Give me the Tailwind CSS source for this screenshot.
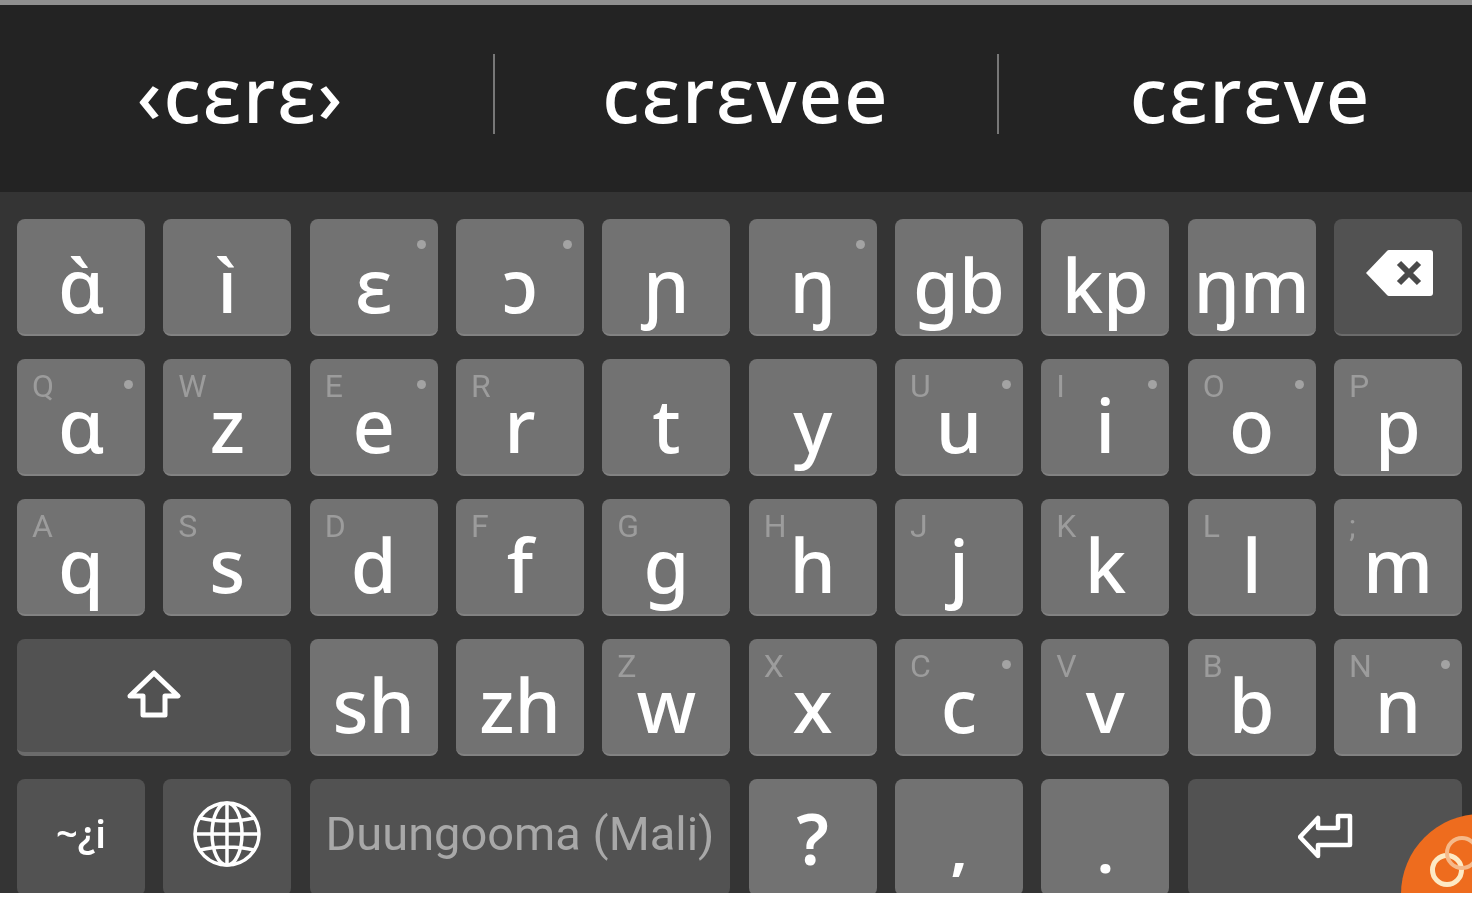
<!DOCTYPE html>
<html lang="en">
<head>
  <meta charset="UTF-8" />
  <title>Keyboard</title>
  <script src="https://cdn.jsdelivr.net/npm/@tailwindcss/browser@4"></script>
</head>
<body class="bg-white">
<div class="relative h-[893px] overflow-hidden bg-[#343434] font-['Noto_Sans',sans-serif] font-medium text-white blur-[0.5px]">
  <div class="h-[5px] bg-[#8f8f8f]"></div>

  <!-- suggestions -->
  <div class="flex h-[187px] items-center bg-[#232323] pb-[10px] text-[76px] leading-none tracking-[2px]">
    <div class="w-[493px] pr-[12px] text-center">‹cɛrɛ›</div>
    <div class="h-[80px] w-[2px] bg-[#777777]"></div>
    <div class="w-[502px] text-center">cɛrɛvee</div>
    <div class="h-[80px] w-[2px] bg-[#777777]"></div>
    <div class="flex-1 pl-[30px] text-center">cɛrɛve</div>
  </div>

  <!-- keys -->
  <div class="grid grid-cols-10 grid-rows-[117px_117px_117px_117px_117px] gap-x-[18.4px] gap-y-[23px] pt-[27px] pr-[10px] pl-[17px] text-[74px] leading-none">
    <div class="flex justify-center rounded-[8px] border-b-2 border-[#828282] bg-[#727272] pt-[29px]">ɑ̀</div>
    <div class="flex justify-center rounded-[8px] border-b-2 border-[#828282] bg-[#727272] pt-[29px]">ì</div>
    <div class="relative flex justify-center rounded-[8px] border-b-2 border-[#828282] bg-[#727272] pt-[29px]">ɛ<span class="absolute top-[21px] right-[12px] size-[9px] rounded-full bg-[#a3a3a3]"></span></div>
    <div class="relative flex justify-center rounded-[8px] border-b-2 border-[#828282] bg-[#727272] pt-[29px]">ɔ<span class="absolute top-[21px] right-[12px] size-[9px] rounded-full bg-[#a3a3a3]"></span></div>
    <div class="flex justify-center rounded-[8px] border-b-2 border-[#828282] bg-[#727272] pt-[29px]">ɲ</div>
    <div class="relative flex justify-center rounded-[8px] border-b-2 border-[#828282] bg-[#727272] pt-[29px]">ŋ<span class="absolute top-[21px] right-[12px] size-[9px] rounded-full bg-[#a3a3a3]"></span></div>
    <div class="flex justify-center rounded-[8px] border-b-2 border-[#828282] bg-[#727272] pt-[29px]">gb</div>
    <div class="flex justify-center rounded-[8px] border-b-2 border-[#828282] bg-[#727272] pt-[29px]">kp</div>
    <div class="flex justify-center rounded-[8px] border-b-2 border-[#828282] bg-[#727272] pt-[29px]">ŋm</div>
    <div class="flex items-start justify-center rounded-[8px] border-b-2 border-[#6b6b6b] bg-[#525252] pt-[30px] pl-[4px]">
      <svg width="70" height="48" viewBox="0 0 70 48"><path fill="#fff" d="M1 24 22 2a3 3 0 0 1 2-1h41a3 3 0 0 1 3 3v40a3 3 0 0 1-3 3H24a3 3 0 0 1-2-1z"/><path stroke="#4a4a4a" stroke-width="6" d="m34 14 20 20M54 14 34 34"/></svg>
    </div>

    <div class="relative flex justify-center rounded-[8px] border-b-2 border-[#828282] bg-[#727272] pt-[29px]"><span class="absolute top-[11px] left-[15px] font-['Roboto',sans-serif] text-[32px] font-normal text-[#9c9c9c]">Q</span><span class="absolute top-[21px] right-[12px] size-[9px] rounded-full bg-[#a3a3a3]"></span>ɑ</div>
    <div class="relative flex justify-center rounded-[8px] border-b-2 border-[#828282] bg-[#727272] pt-[29px]"><span class="absolute top-[11px] left-[15px] font-['Roboto',sans-serif] text-[32px] font-normal text-[#9c9c9c]">W</span>z</div>
    <div class="relative flex justify-center rounded-[8px] border-b-2 border-[#828282] bg-[#727272] pt-[29px]"><span class="absolute top-[11px] left-[15px] font-['Roboto',sans-serif] text-[32px] font-normal text-[#9c9c9c]">E</span><span class="absolute top-[21px] right-[12px] size-[9px] rounded-full bg-[#a3a3a3]"></span>e</div>
    <div class="relative flex justify-center rounded-[8px] border-b-2 border-[#828282] bg-[#727272] pt-[29px]"><span class="absolute top-[11px] left-[15px] font-['Roboto',sans-serif] text-[32px] font-normal text-[#9c9c9c]">R</span>r</div>
    <div class="flex justify-center rounded-[8px] border-b-2 border-[#828282] bg-[#727272] pt-[29px]">t</div>
    <div class="flex justify-center rounded-[8px] border-b-2 border-[#828282] bg-[#727272] pt-[29px]">y</div>
    <div class="relative flex justify-center rounded-[8px] border-b-2 border-[#828282] bg-[#727272] pt-[29px]"><span class="absolute top-[11px] left-[15px] font-['Roboto',sans-serif] text-[32px] font-normal text-[#9c9c9c]">U</span><span class="absolute top-[21px] right-[12px] size-[9px] rounded-full bg-[#a3a3a3]"></span>u</div>
    <div class="relative flex justify-center rounded-[8px] border-b-2 border-[#828282] bg-[#727272] pt-[29px]"><span class="absolute top-[11px] left-[15px] font-['Roboto',sans-serif] text-[32px] font-normal text-[#9c9c9c]">I</span><span class="absolute top-[21px] right-[12px] size-[9px] rounded-full bg-[#a3a3a3]"></span>i</div>
    <div class="relative flex justify-center rounded-[8px] border-b-2 border-[#828282] bg-[#727272] pt-[29px]"><span class="absolute top-[11px] left-[15px] font-['Roboto',sans-serif] text-[32px] font-normal text-[#9c9c9c]">O</span><span class="absolute top-[21px] right-[12px] size-[9px] rounded-full bg-[#a3a3a3]"></span>o</div>
    <div class="relative flex justify-center rounded-[8px] border-b-2 border-[#828282] bg-[#727272] pt-[29px]"><span class="absolute top-[11px] left-[15px] font-['Roboto',sans-serif] text-[32px] font-normal text-[#9c9c9c]">P</span>p</div>

    <div class="relative flex justify-center rounded-[8px] border-b-2 border-[#828282] bg-[#727272] pt-[29px]"><span class="absolute top-[11px] left-[15px] font-['Roboto',sans-serif] text-[32px] font-normal text-[#9c9c9c]">A</span>q</div>
    <div class="relative flex justify-center rounded-[8px] border-b-2 border-[#828282] bg-[#727272] pt-[29px]"><span class="absolute top-[11px] left-[15px] font-['Roboto',sans-serif] text-[32px] font-normal text-[#9c9c9c]">S</span>s</div>
    <div class="relative flex justify-center rounded-[8px] border-b-2 border-[#828282] bg-[#727272] pt-[29px]"><span class="absolute top-[11px] left-[15px] font-['Roboto',sans-serif] text-[32px] font-normal text-[#9c9c9c]">D</span>d</div>
    <div class="relative flex justify-center rounded-[8px] border-b-2 border-[#828282] bg-[#727272] pt-[29px]"><span class="absolute top-[11px] left-[15px] font-['Roboto',sans-serif] text-[32px] font-normal text-[#9c9c9c]">F</span>f</div>
    <div class="relative flex justify-center rounded-[8px] border-b-2 border-[#828282] bg-[#727272] pt-[29px]"><span class="absolute top-[11px] left-[15px] font-['Roboto',sans-serif] text-[32px] font-normal text-[#9c9c9c]">G</span>g</div>
    <div class="relative flex justify-center rounded-[8px] border-b-2 border-[#828282] bg-[#727272] pt-[29px]"><span class="absolute top-[11px] left-[15px] font-['Roboto',sans-serif] text-[32px] font-normal text-[#9c9c9c]">H</span>h</div>
    <div class="relative flex justify-center rounded-[8px] border-b-2 border-[#828282] bg-[#727272] pt-[29px]"><span class="absolute top-[11px] left-[15px] font-['Roboto',sans-serif] text-[32px] font-normal text-[#9c9c9c]">J</span>j</div>
    <div class="relative flex justify-center rounded-[8px] border-b-2 border-[#828282] bg-[#727272] pt-[29px]"><span class="absolute top-[11px] left-[15px] font-['Roboto',sans-serif] text-[32px] font-normal text-[#9c9c9c]">K</span>k</div>
    <div class="relative flex justify-center rounded-[8px] border-b-2 border-[#828282] bg-[#727272] pt-[29px]"><span class="absolute top-[11px] left-[15px] font-['Roboto',sans-serif] text-[32px] font-normal text-[#9c9c9c]">L</span>l</div>
    <div class="relative flex justify-center rounded-[8px] border-b-2 border-[#828282] bg-[#727272] pt-[29px]"><span class="absolute top-[11px] left-[15px] font-['Roboto',sans-serif] text-[32px] font-normal text-[#9c9c9c]">;</span>m</div>

    <div class="col-span-2 flex items-start justify-center rounded-[8px] border-b-4 border-[#6b6b6b] bg-[#525252] pt-[31px]">
      <svg width="54" height="48" viewBox="0 0 54 48" fill="none" stroke="#fff" stroke-width="5" stroke-linejoin="round"><path d="M27 3 51 26H38V45H16V26H3z"/></svg>
    </div>
    <div class="flex justify-center rounded-[8px] border-b-2 border-[#828282] bg-[#727272] pt-[29px]">sh</div>
    <div class="flex justify-center rounded-[8px] border-b-2 border-[#828282] bg-[#727272] pt-[29px]">zh</div>
    <div class="relative flex justify-center rounded-[8px] border-b-2 border-[#828282] bg-[#727272] pt-[29px]"><span class="absolute top-[11px] left-[15px] font-['Roboto',sans-serif] text-[32px] font-normal text-[#9c9c9c]">Z</span>w</div>
    <div class="relative flex justify-center rounded-[8px] border-b-2 border-[#828282] bg-[#727272] pt-[29px]"><span class="absolute top-[11px] left-[15px] font-['Roboto',sans-serif] text-[32px] font-normal text-[#9c9c9c]">X</span>x</div>
    <div class="relative flex justify-center rounded-[8px] border-b-2 border-[#828282] bg-[#727272] pt-[29px]"><span class="absolute top-[11px] left-[15px] font-['Roboto',sans-serif] text-[32px] font-normal text-[#9c9c9c]">C</span><span class="absolute top-[21px] right-[12px] size-[9px] rounded-full bg-[#a3a3a3]"></span>c</div>
    <div class="relative flex justify-center rounded-[8px] border-b-2 border-[#828282] bg-[#727272] pt-[29px]"><span class="absolute top-[11px] left-[15px] font-['Roboto',sans-serif] text-[32px] font-normal text-[#9c9c9c]">V</span>v</div>
    <div class="relative flex justify-center rounded-[8px] border-b-2 border-[#828282] bg-[#727272] pt-[29px]"><span class="absolute top-[11px] left-[15px] font-['Roboto',sans-serif] text-[32px] font-normal text-[#9c9c9c]">B</span>b</div>
    <div class="relative flex justify-center rounded-[8px] border-b-2 border-[#828282] bg-[#727272] pt-[29px]"><span class="absolute top-[11px] left-[15px] font-['Roboto',sans-serif] text-[32px] font-normal text-[#9c9c9c]">N</span><span class="absolute top-[21px] right-[12px] size-[9px] rounded-full bg-[#a3a3a3]"></span>n</div>

    <div class="flex items-center justify-center rounded-[8px] bg-[#525252] pb-[10px] text-[38px] font-semibold">~¿i</div>
    <div class="flex items-center justify-center rounded-[8px] bg-[#525252] pb-[8px]">
      <svg width="68" height="66" viewBox="0 0 68 66" fill="none" stroke="#fff" stroke-width="3.5"><ellipse cx="34" cy="33" rx="32" ry="31"/><ellipse cx="34" cy="33" rx="15" ry="31"/><path d="M34 2v62M2 33h64M7 17c16 4 38 4 54 0M7 49c16-4 38-4 54 0"/></svg>
    </div>
    <div class="col-span-3 flex items-center justify-center rounded-[8px] bg-[#525252] pb-[8px] font-['Roboto',sans-serif] text-[47px] font-normal text-[#a8a8a8]">Duungooma (Mali)</div>
    <div class="flex items-center justify-center rounded-[8px] bg-[#727272] text-[70px] font-semibold">?</div>
    <div class="flex justify-center rounded-[8px] bg-[#727272] pt-[40px] text-[58px] font-bold">,</div>
    <div class="flex justify-center rounded-[8px] bg-[#727272] pt-[43px] text-[58px] font-bold">.</div>
    <div class="col-span-2 flex items-start justify-center rounded-[8px] bg-[#525252] pt-[34px] pl-[2px]">
      <svg width="56" height="46" viewBox="0 0 56 46" fill="none" stroke="#fff" stroke-width="4.5" stroke-linejoin="round"><path d="M2 24 20 5v10h20V3h12v29H20v11z"/></svg>
    </div>
  </div>

  <!-- floating badge over the enter key -->
  <div class="absolute top-[814px] left-[1401px] size-[160px] rounded-full bg-[#ee6c1e]">
    <span class="absolute top-[39px] left-[29px] size-[34px] rounded-full border-[5px] border-[#fde9c4]"></span>
    <span class="absolute top-[22px] left-[44px] size-[34px] rounded-full border-[4px] border-[#f5b98a]"></span>
  </div>
</div>
</body>
</html>
